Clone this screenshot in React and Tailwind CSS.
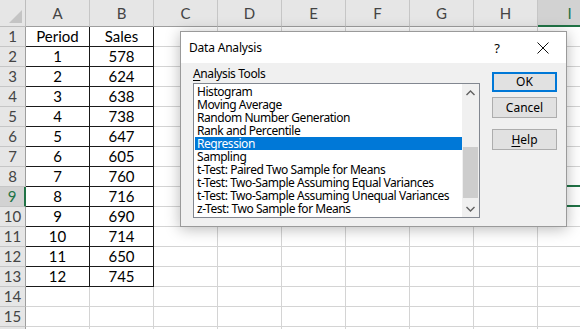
import React from 'react';

const cols = ['A', 'B', 'C', 'D', 'E', 'F', 'G', 'H', 'I'];
const data = [
  ['Period', 'Sales'],
  [1, 578], [2, 624], [3, 638], [4, 738], [5, 647], [6, 605],
  [7, 760], [8, 716], [9, 690], [10, 714], [11, 650], [12, 745],
];
const tools = [
  'Histogram',
  'Moving Average',
  'Random Number Generation',
  'Rank and Percentile',
  'Regression',
  'Sampling',
  't-Test: Paired Two Sample for Means',
  't-Test: Two-Sample Assuming Equal Variances',
  't-Test: Two-Sample Assuming Unequal Variances',
  'z-Test: Two Sample for Means',
];

function HeaderRow() {
  return (
    <div className="flex h-[27px]">
      <div className="w-[26px] h-[27px] shrink-0 bg-[#e6e6e6] border-r border-b border-[#bdbdbd] relative">
        <svg className="absolute right-[3px] bottom-[3px]" width="13" height="13" viewBox="0 0 13 13">
          <polygon points="13,0 13,13 0,13" fill="#c4c4c4" />
        </svg>
      </div>
      {cols.map((c) => {
        const sel = c === 'I';
        return (
          <div
            key={c}
            className={
              sel
                ? 'w-[64px] h-[27px] shrink-0 bg-[#d2d2d2] border-r border-[#c6c6c6] border-b-2 border-b-[#217346] flex items-center justify-center text-[#217346] pt-[1px]'
                : 'w-[64px] h-[27px] shrink-0 bg-[#e6e6e6] border-r border-b border-r-[#c6c6c6] border-b-[#9e9e9e] flex items-center justify-center text-[#444] pt-[1px]'
            }
          >
            {c}
          </div>
        );
      })}
    </div>
  );
}

function DataRow({ r }) {
  const row = data[r - 1];
  const sel = r === 9;
  return (
    <div className="flex h-[20px]">
      <div
        className={
          sel
            ? 'w-[26px] h-[20px] shrink-0 bg-[#d2d2d2] border-b border-b-[#c6c6c6] border-r-2 border-r-[#217346] flex items-center justify-center text-[#217346]'
            : 'w-[26px] h-[20px] shrink-0 bg-[#e6e6e6] border-r border-b border-r-[#9e9e9e] border-b-[#c6c6c6] flex items-center justify-center text-[#444]'
        }
      >
        {r <= 15 ? r : null}
      </div>
      {cols.map((c, i) => {
        const inTable = row && i < 2;
        const cls = inTable
          ? 'w-[64px] h-[20px] shrink-0 border-r border-b border-[#1a1a1a] flex items-center justify-center text-black relative'
          : 'w-[64px] h-[20px] shrink-0 border-r border-b border-[#d4d4d4] flex items-center justify-center relative';
        return (
          <div key={c} className={cls}>
            {inTable ? row[i] : null}
            {sel && c === 'I' ? (
              <div className="absolute -left-[1px] -top-[2px] w-[65px] h-[22px] border-2 border-[#217346]" />
            ) : null}
          </div>
        );
      })}
    </div>
  );
}

function Dialog() {
  return (
    <div
      className="absolute left-[180px] top-[31px] w-[387px] h-[196px] border border-[#9a9a9a] bg-[#f0f0f0] shadow-[0_2px_14px_rgba(0,0,0,0.28)] flex flex-col text-[12px] text-black"
      style={{ fontFamily: '"Noto Sans", "Open Sans", sans-serif' }}
    >
      <div className="h-[31px] bg-white flex items-center shrink-0">
        <span className="pl-[8px] pt-[1px] tracking-[-0.2px]">Data Analysis</span>
        <div className="ml-auto flex h-full">
          <div className="w-[46px] h-full flex items-center justify-center text-[13px] pt-[1px]">?</div>
          <div className="w-[46px] h-full flex items-center justify-center">
            <svg width="12" height="12" viewBox="0 0 12 12">
              <path d="M0.5 0.5 L11.5 11.5 M11.5 0.5 L0.5 11.5" stroke="#111" strokeWidth="1" />
            </svg>
          </div>
        </div>
      </div>
      <div className="flex pl-[12px]">
        <div className="flex flex-col">
          <div className="mt-[3px] h-[16px] leading-[16px] tracking-[-0.4px]">
            <span className="underline underline-offset-2">A</span>nalysis Tools
          </div>
          <div className="mt-[1px] w-[287px] h-[135px] border border-[#828790] bg-white flex">
            <div className="w-[268px] shrink-0 overflow-hidden pt-[1px] pl-[1px] flex flex-col tracking-[-0.45px]">
              {tools.map((t) => (
                <div
                  key={t}
                  className={
                    t === 'Regression'
                      ? 'h-[13px] leading-[13px] pl-[2px] bg-[#0078d7] text-white whitespace-nowrap'
                      : 'h-[13px] leading-[13px] pl-[2px] whitespace-nowrap'
                  }
                >
                  {t}
                </div>
              ))}
            </div>
            <div className="w-[17px] shrink-0 h-full bg-[#f0f0f0] flex flex-col items-center">
              <div className="h-[17px] w-full flex items-center justify-center">
                <svg width="9" height="6" viewBox="0 0 9 6">
                  <path d="M0.5 5 L4.5 1 L8.5 5" fill="none" stroke="#606060" strokeWidth="1.4" />
                </svg>
              </div>
              <div className="flex-1 w-full flex flex-col px-[1px]">
                <div className="h-[46px]" />
                <div className="h-[51px] w-full bg-[#cdcdcd]" />
              </div>
              <div className="h-[17px] w-full flex items-center justify-center">
                <svg width="9" height="6" viewBox="0 0 9 6">
                  <path d="M0.5 1 L4.5 5 L8.5 1" fill="none" stroke="#606060" strokeWidth="1.4" />
                </svg>
              </div>
            </div>
          </div>
        </div>
        <div className="ml-[12px] mt-[9px] flex flex-col w-[65px]">
          <div className="h-[20px] border-2 border-[#0078d7] bg-[#e1e1e1] flex items-center justify-center">OK</div>
          <div className="mt-[5px] h-[21px] border border-[#adadad] bg-[#e1e1e1] flex items-center justify-center">Cancel</div>
          <div className="mt-[11px] h-[21px] border border-[#adadad] bg-[#e1e1e1] flex items-center justify-center">
            <span><span className="underline underline-offset-2">H</span>elp</span>
          </div>
        </div>
      </div>
    </div>
  );
}

export default function App() {
  const rows = Array.from({ length: 16 }, (_, i) => i + 1);
  return (
    <div
      className="relative w-[580px] h-[329px] overflow-hidden bg-white text-[15px] leading-none"
      style={{ fontFamily: 'Lato, "Open Sans", sans-serif' }}
    >
      <HeaderRow />
      {rows.map((r) => (
        <DataRow key={r} r={r} />
      ))}
      <Dialog />
    </div>
  );
}
